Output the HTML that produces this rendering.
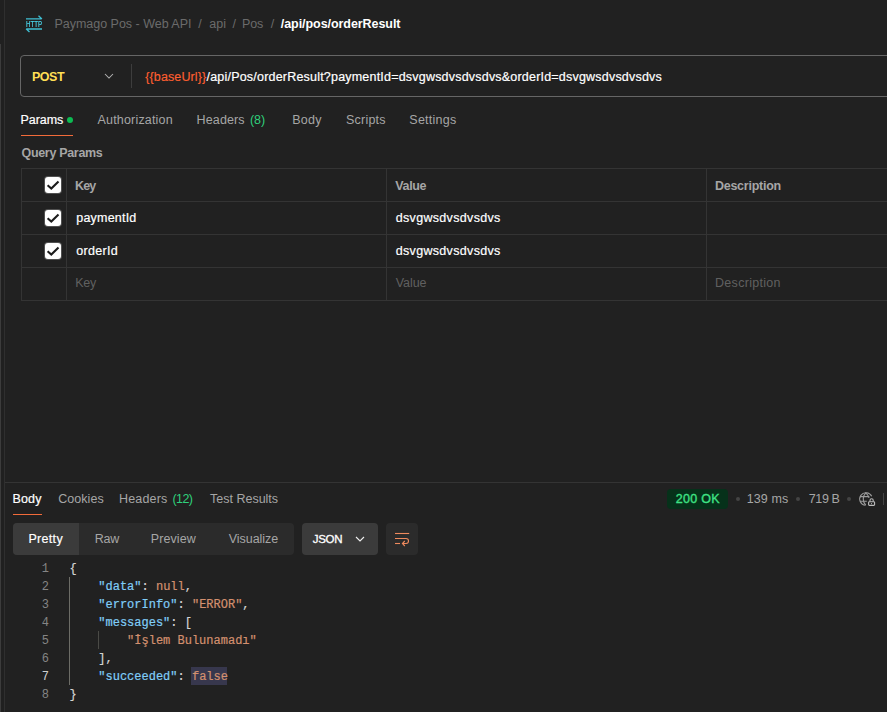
<!DOCTYPE html>
<html lang="en">
<head>
<meta charset="utf-8">
<title>Paymago Pos - Web API / api / Pos / orderResult</title>
<style>
html,body{margin:0;padding:0}
body{width:887px;height:712px;overflow:hidden;background:#212121;position:relative;font-family:"Liberation Sans",sans-serif;}
.abs{position:absolute}
.t{position:absolute;white-space:pre;line-height:16px;font-family:"Liberation Sans",sans-serif}
.strip{left:0;top:0;width:4px;height:712px;background:#202020;border-right:1px solid #2f2f2f}
.thumb{left:0;top:44px;width:1px;height:668px;background:#3c3c3c}
.urlbox{left:20px;top:55px;width:900px;height:40px;border:1px solid #666;border-radius:4px;background:#212121}
.vdiv{left:131px;top:64px;width:1px;height:24px;background:#3d3d3d}
.uline{height:1px;background:#f26b3a}
.dot{border-radius:50%}
.tbl{left:21px;top:168px;width:900px;height:133px;border:1px solid #343434;border-right:0;box-sizing:border-box}
.hl{left:21px;width:900px;height:1px;background:#343434}
.vl{top:168px;width:1px;height:133px;background:#343434}
.cb{left:45px;width:16px;height:16px;background:#fff;border-radius:3px;box-shadow:0 0 0 1px rgba(255,255,255,.22)}
.sep{left:5px;top:482px;width:882px;height:1px;background:#343434}
.seg{left:13px;top:523px;width:281px;height:32px;border-radius:4px;background:#2b2b2b}
.segsel{left:13px;top:523px;width:66px;height:32px;border-radius:4px 0 0 4px;background:#3b3b3b}
.jsonbtn{left:302px;top:523px;width:76px;height:32px;border-radius:4px;background:#3b3b3b}
.wrapbtn{left:386px;top:523px;width:32px;height:32px;border-radius:4px;background:#2b2b2b}
.badge{left:667px;top:489px;width:61px;height:20px;border-radius:4px;background:#06311a}
.code{position:absolute;left:69.5px;white-space:pre;font-family:"Liberation Mono",monospace;font-size:12px;line-height:18px;height:18px;color:#d4d4d4}
.ln{position:absolute;left:20px;width:29px;text-align:right;font-family:"Liberation Mono",monospace;font-size:12px;line-height:18px;height:18px;color:#858585}
.code span{-webkit-text-stroke:0.2px currentColor}
.k{color:#80cdf8}.s{color:#d3906f}.p{color:#d4d4d4}
.guide{width:1px;background:#6c6c66}
</style>
</head>
<body>
<div class="abs strip"></div>
<div class="abs thumb"></div>

<!-- HTTP icon -->
<svg class="abs" style="left:24px;top:14px;will-change:transform" width="20" height="20" viewBox="0 0 20 20">
  <g fill="none" stroke="#3fc0d4" stroke-width="1.3">
    <path d="M2 4.8 H17.4 M14.5 1.8 L17.9 5"/>
    <path d="M18 15 H2.6 M5.5 18 L2.1 14.8"/>
  </g>
  <text x="2" y="12.9" font-family="Liberation Sans, sans-serif" font-size="8.4" fill="#4ad8ee" stroke="#4ad8ee" stroke-width="0.2" textLength="16" lengthAdjust="spacingAndGlyphs">HTTP</text>
</svg>

<!-- URL bar -->
<div class="abs urlbox"></div>
<div class="abs vdiv"></div>
<svg class="abs" style="left:103px;top:71px" width="12" height="10" viewBox="0 0 12 10"><path d="M2 3 L6 7 L10 3" fill="none" stroke="#b4b4b4" stroke-width="1.05"/></svg>

<!-- request tabs -->
<div class="abs uline" style="left:21px;top:135px;width:52px"></div>
<div class="abs dot" style="left:67px;top:117px;width:6px;height:6px;background:#0cbb52"></div>

<!-- params table -->
<div class="abs tbl"></div>
<div class="abs hl" style="top:201px"></div>
<div class="abs hl" style="top:234px"></div>
<div class="abs hl" style="top:267px"></div>
<div class="abs vl" style="left:66px"></div>
<div class="abs vl" style="left:386px"></div>
<div class="abs vl" style="left:706px"></div>
<div class="abs cb" style="top:177px"><svg width="16" height="16" viewBox="0 0 16 16"><path d="M2.6 8.2 L6.3 11.5 L13.5 4.4" fill="none" stroke="#1c1c1c" stroke-width="2.1"/></svg></div>
<div class="abs cb" style="top:210px"><svg width="16" height="16" viewBox="0 0 16 16"><path d="M2.6 8.2 L6.3 11.5 L13.5 4.4" fill="none" stroke="#1c1c1c" stroke-width="2.1"/></svg></div>
<div class="abs cb" style="top:243px"><svg width="16" height="16" viewBox="0 0 16 16"><path d="M2.6 8.2 L6.3 11.5 L13.5 4.4" fill="none" stroke="#1c1c1c" stroke-width="2.1"/></svg></div>

<!-- response pane -->
<div class="abs sep"></div>
<div class="abs uline" style="left:13px;top:514px;width:29px;height:1px"></div>
<div class="abs badge"></div>
<div class="abs dot" style="left:736px;top:497px;width:4px;height:4px;background:#444"></div>
<div class="abs dot" style="left:796px;top:497px;width:4px;height:4px;background:#444"></div>
<div class="abs dot" style="left:847px;top:497px;width:4px;height:4px;background:#444"></div>
<svg class="abs" style="left:858px;top:490px" width="19" height="18" viewBox="0 0 19 18">
  <g fill="none" stroke="#9c9c9c" stroke-width="1.1">
    <path d="M7.45 15.28 A6.3 6.3 0 1 1 13.7 6.3"/>
    <path d="M7.8 15.2 C4.4 11.8 4.4 6.2 7.8 2.8 C9.8 4.6 10.8 6.2 11 8"/>
    <path d="M2 6.6 H11.4 M2 11.2 H8.8"/>
  </g>
  <g fill="none" stroke="#bcbcbc" stroke-width="1.1">
    <rect x="10.6" y="11.7" width="6" height="3.7" rx="0.8"/><path d="M13.2 13.6 H14"/>
    <path d="M12 11.6 V10.3 A1.6 1.6 0 0 1 15.2 10.3 V11.6"/>
  </g>
</svg>
<div class="abs" style="left:883px;top:493px;width:1px;height:12px;background:#444"></div>

<div class="abs seg"></div>
<div class="abs segsel"></div>
<div class="abs jsonbtn"></div>
<svg class="abs" style="left:354px;top:534px" width="12" height="10" viewBox="0 0 12 10"><path d="M2 3 L6 7 L10 3" fill="none" stroke="#f0f0f0" stroke-width="1.1"/></svg>
<div class="abs wrapbtn"></div>
<svg class="abs" style="left:392px;top:530px" width="20" height="18" viewBox="0 0 20 18">
  <g fill="none" stroke="#ee8a5e" stroke-width="1.1">
    <path d="M3 3.5 H17.2"/>
    <path d="M3 8.5 H14 A2.5 2.5 0 0 1 14 13.5 H10.6"/>
    <path d="M3 13.5 H8"/>
    <path d="M12.8 11 L10.4 13.5 L12.8 16"/>
  </g>
</svg>

<!-- code -->
<div class="abs" style="left:191px;top:667px;width:36px;height:18px;background:#37374d"></div>
<div class="abs guide" style="left:69px;top:577px;height:108px"></div>
<div class="abs guide" style="left:98px;top:631px;height:18px;background:#4a4a46"></div>
<div class="ln" style="top:560px">1</div><div class="code" style="top:560px"><span class="p">{</span></div>
<div class="ln" style="top:578px">2</div><div class="code" style="top:578px">    <span class="k">"data"</span><span class="p">: </span><span class="s">null</span><span class="p">,</span></div>
<div class="ln" style="top:596px">3</div><div class="code" style="top:596px">    <span class="k">"errorInfo"</span><span class="p">: </span><span class="s">"ERROR"</span><span class="p">,</span></div>
<div class="ln" style="top:614px">4</div><div class="code" style="top:614px">    <span class="k">"messages"</span><span class="p">: [</span></div>
<div class="ln" style="top:632px">5</div><div class="code" style="top:632px">        <span class="s">"İşlem Bulunamadı"</span></div>
<div class="ln" style="top:650px">6</div><div class="code" style="top:650px">    <span class="p">],</span></div>
<div class="ln" style="top:668px;color:#d0d0d0">7</div><div class="code" style="top:668px">    <span class="k">"succeeded"</span><span class="p">: </span><span class="s">false</span></div>
<div class="ln" style="top:686px">8</div><div class="code" style="top:686px"><span class="p">}</span></div>

<span class="t" style="left:54.50px;top:16.00px;font-size:12.5px;color:#6b6b6b;letter-spacing:-0.020px">Paymago Pos - Web API</span>
<span class="t" style="left:198.30px;top:16.00px;font-size:12.5px;color:#6b6b6b;letter-spacing:0.000px">/</span>
<span class="t" style="left:209.20px;top:16.00px;font-size:12.5px;color:#6b6b6b;letter-spacing:0.100px">api</span>
<span class="t" style="left:232.40px;top:16.00px;font-size:12.5px;color:#6b6b6b;letter-spacing:0.000px">/</span>
<span class="t" style="left:242.00px;top:16.00px;font-size:12.5px;color:#6b6b6b;letter-spacing:-0.150px">Pos</span>
<span class="t" style="left:270.80px;top:16.00px;font-size:12.5px;color:#6b6b6b;letter-spacing:0.000px">/</span>
<span class="t" style="left:280.80px;top:16.00px;font-size:12.5px;font-weight:700;color:#ffffff;letter-spacing:-0.063px">/api/pos/orderResult</span>
<span class="t" style="left:31.90px;top:69.00px;font-size:12.5px;font-weight:700;color:#ffdf55;letter-spacing:-0.433px">POST</span>
<span class="t" style="left:145.20px;top:69.00px;font-size:12.5px;-webkit-text-stroke:0.15px #ff5f30;color:#ff5f30;letter-spacing:0.130px">{{baseUrl}}</span>
<span class="t" style="left:206.50px;top:69.00px;font-size:12.5px;-webkit-text-stroke:0.2px #ffffff;color:#ffffff;letter-spacing:0.204px">/api/Pos/orderResult?paymentId=dsvgwsdvsdvsdvs&amp;orderId=dsvgwsdvsdvsdvs</span>
<span class="t" style="left:20.50px;top:112.00px;font-size:12.5px;-webkit-text-stroke:0.2px #ffffff;color:#ffffff;letter-spacing:-0.060px">Params</span>
<span class="t" style="left:97.50px;top:112.00px;font-size:12.5px;color:#a6a6a6;letter-spacing:0.183px">Authorization</span>
<span class="t" style="left:196.60px;top:112.00px;font-size:12.5px;color:#a6a6a6;letter-spacing:0.117px">Headers</span>
<span class="t" style="left:250.00px;top:112.00px;font-size:12.5px;color:#2fd07c;letter-spacing:-0.100px">(8)</span>
<span class="t" style="left:292.20px;top:112.00px;font-size:12.5px;color:#a6a6a6;letter-spacing:0.267px">Body</span>
<span class="t" style="left:345.90px;top:112.00px;font-size:12.5px;color:#a6a6a6;letter-spacing:0.250px">Scripts</span>
<span class="t" style="left:409.30px;top:112.00px;font-size:12.5px;color:#a6a6a6;letter-spacing:0.257px">Settings</span>
<span class="t" style="left:21.50px;top:145.00px;font-size:12.5px;font-weight:700;color:#a6a6a6;letter-spacing:-0.318px">Query Params</span>
<span class="t" style="left:75.10px;top:178.00px;font-size:12.5px;font-weight:700;color:#a6a6a6;letter-spacing:-0.950px">Key</span>
<span class="t" style="left:395.30px;top:178.00px;font-size:12.5px;font-weight:700;color:#a6a6a6;letter-spacing:-0.350px">Value</span>
<span class="t" style="left:714.90px;top:178.00px;font-size:12.5px;font-weight:700;color:#a6a6a6;letter-spacing:-0.240px">Description</span>
<span class="t" style="left:76.30px;top:210.00px;font-size:12.5px;-webkit-text-stroke:0.2px #ffffff;color:#ffffff;letter-spacing:0.200px">paymentId</span>
<span class="t" style="left:395.70px;top:210.00px;font-size:12.5px;-webkit-text-stroke:0.2px #ffffff;color:#ffffff;letter-spacing:0.329px">dsvgwsdvsdvsdvs</span>
<span class="t" style="left:76.30px;top:243.00px;font-size:12.5px;-webkit-text-stroke:0.2px #ffffff;color:#ffffff;letter-spacing:0.283px">orderId</span>
<span class="t" style="left:395.70px;top:243.00px;font-size:12.5px;-webkit-text-stroke:0.2px #ffffff;color:#ffffff;letter-spacing:0.329px">dsvgwsdvsdvsdvs</span>
<span class="t" style="left:75.30px;top:275.00px;font-size:12.5px;color:#606060;letter-spacing:-0.350px">Key</span>
<span class="t" style="left:395.70px;top:275.00px;font-size:12.5px;color:#606060;letter-spacing:-0.050px">Value</span>
<span class="t" style="left:715.00px;top:275.00px;font-size:12.5px;color:#606060;letter-spacing:0.300px">Description</span>
<span class="t" style="left:12.50px;top:491.00px;font-size:12.5px;-webkit-text-stroke:0.2px #ffffff;color:#ffffff;letter-spacing:0.133px">Body</span>
<span class="t" style="left:58.20px;top:491.00px;font-size:12.5px;color:#a6a6a6;letter-spacing:0.050px">Cookies</span>
<span class="t" style="left:119.00px;top:491.00px;font-size:12.5px;color:#a6a6a6;letter-spacing:0.167px">Headers</span>
<span class="t" style="left:172.50px;top:491.00px;font-size:12.5px;color:#2fd07c;letter-spacing:-0.567px">(12)</span>
<span class="t" style="left:210.00px;top:491.00px;font-size:12.5px;color:#a6a6a6;letter-spacing:0.000px">Test Results</span>
<span class="t" style="left:675.70px;top:491.00px;font-size:12.5px;-webkit-text-stroke:0.35px #3fe285;color:#3fe285;letter-spacing:0.300px">200 OK</span>
<span class="t" style="left:746.70px;top:491.00px;font-size:12.5px;color:#a6a6a6;letter-spacing:0.100px">139 ms</span>
<span class="t" style="left:808.70px;top:491.00px;font-size:12.5px;color:#a6a6a6;letter-spacing:-0.350px">719 B</span>
<span class="t" style="left:28.40px;top:531.00px;font-size:12.5px;-webkit-text-stroke:0.2px #ffffff;color:#ffffff;letter-spacing:0.320px">Pretty</span>
<span class="t" style="left:94.70px;top:531.00px;font-size:12.5px;color:#a6a6a6;letter-spacing:-0.200px">Raw</span>
<span class="t" style="left:150.80px;top:531.00px;font-size:12.5px;color:#a6a6a6;letter-spacing:0.083px">Preview</span>
<span class="t" style="left:228.70px;top:531.00px;font-size:12.5px;color:#a6a6a6;letter-spacing:-0.038px">Visualize</span>
<span class="t" style="left:312.80px;top:531.00px;font-size:11.5px;-webkit-text-stroke:0.3px #ffffff;color:#ffffff;letter-spacing:-0.333px">JSON</span>
</body>
</html>
